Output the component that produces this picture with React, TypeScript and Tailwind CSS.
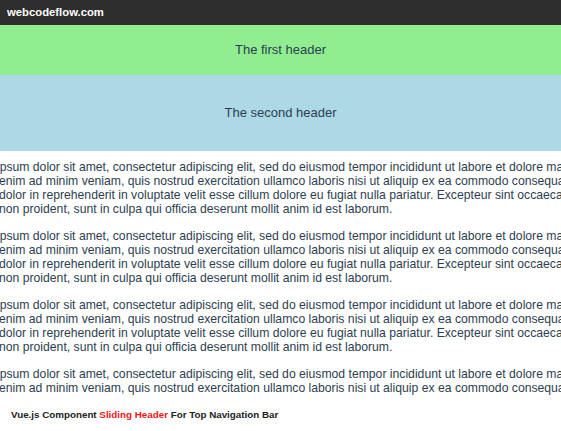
import { memo } from 'react'

// each paragraph is drawn as its wrapped lines so the breaks stay put
const paragraphLines = [
    'Lorem ipsum dolor sit amet, consectetur adipiscing elit, sed do eiusmod tempor incididunt ut labore et dolore magna aliqua. Ut',
    'enim ad minim veniam, quis nostrud exercitation ullamco laboris nisi ut aliquip ex ea commodo consequat. Duis aute irure',
    'dolor in reprehenderit in voluptate velit esse cillum dolore eu fugiat nulla pariatur. Excepteur sint occaecat cupidatat',
    'non proident, sunt in culpa qui officia deserunt mollit anim id est laborum.',
]

const Paragraph = memo(() => (
    <div className="mb-[13px] -ml-[1px] whitespace-nowrap leading-[14px]">
        {paragraphLines.map((line, i) => (
            <div key={i} className={i === 0 ? '-ml-[40px]' : ''}>
                {line}
            </div>
        ))}
    </div>
))
Paragraph.displayName = 'Paragraph'

export default function App() {
    return (
        <div
            className="h-[431px] w-[561px] flex flex-col overflow-hidden bg-white text-[#2c3e50]"
            style={{ fontFamily: '"Liberation Sans", Arial, sans-serif' }}
        >
            <div className="h-[25px] shrink-0 bg-[#2e2e2e] flex items-center pl-[7px]">
                <span className="text-white font-bold text-[11.3px]">webcodeflow.com</span>
            </div>

            <div className="flex-1 overflow-hidden">
                <header className="h-[50px] bg-[#90ee90] flex items-center justify-center text-[13px]">
                    The first header
                </header>
                <header className="h-[76px] bg-[#add8e6] flex items-center justify-center text-[13px]">
                    The second header
                </header>

                <main className="pt-[9px] text-[12.2px]">
                    <Paragraph />
                    <Paragraph />
                    <Paragraph />
                    <Paragraph />
                </main>
            </div>

            <footer className="h-[36px] shrink-0 bg-white flex items-center pt-[4px] pl-[11px] text-[9.8px] font-bold text-[#222]">
                Vue.js Component&nbsp;<span className="text-[#f01515]">Sliding Header</span>&nbsp;For Top Navigation Bar
            </footer>
        </div>
    )
}
